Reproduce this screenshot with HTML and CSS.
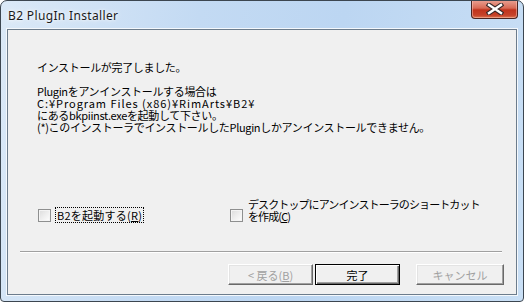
FILE: index.html
```html
<!DOCTYPE html>
<html lang="ja">
<head>
  <meta charset="UTF-8">
  <title>B2 PlugIn Installer</title>
  <link rel="stylesheet" href="styles.css">
</head>
<body>

<div class="window">
  <div class="titlebar">
    <span class="title">B2 PlugIn Installer</span>
    <button class="close" title="閉じる">
      <svg width="18" height="12" viewBox="0 0 18 12">
        <path d="M3 2 L15 10 M15 2 L3 10" stroke="#3a2a2a" stroke-width="4.6" stroke-linecap="square"/>
        <path d="M3 2 L15 10 M15 2 L3 10" stroke="#ffffff" stroke-width="2.4" stroke-linecap="square"/>
      </svg>
    </button>
  </div>

  <div class="client">
    <div class="message">
      <p>インストールが完了しました。</p>
      <p>Pluginをアンインストールする場合は<br>
        <span class="path">C:¥Program Files (x86)¥RimArts¥B2¥</span><br>
        にあるbkpiinst.exeを起動して下さい。<br>
        (*)このインストーラでインストールしたPluginしかアンインストールできません。</p>
    </div>

    <div class="options">
      <label class="check first">
        <span class="box"></span>
        <span class="text focus">B2を起動する(<u>R</u>)</span>
      </label>
      <label class="check wide">
        <span class="box"></span>
        <span class="text">デスクトップにアンインストーラのショートカット<br>を作成(<u>C</u>)</span>
      </label>
    </div>

    <hr class="sep">

    <div class="buttons">
      <button class="btn" disabled>&lt;&nbsp;戻る(<u>B</u>)</button>
      <button class="btn default">完了</button>
      <button class="btn cancel" disabled>キャンセル</button>
    </div>
  </div>
</div>

</body>
</html>
```

FILE: styles.css
```css
body {
  margin: 0;
  background: #ffffff;
  font-family: "Noto Sans CJK JP", sans-serif;
}

.window {
  width: 524px;
  height: 302px;
  box-sizing: border-box;
  border: 1px solid #3c4650;
  border-radius: 7px 7px 4px 4px;
  background: linear-gradient(100deg, #dbe9f7 0%, #c3daf3 35%, #bcd6f2 60%, #c9dff5 100%);
  display: flex;
  flex-direction: column;
  overflow: hidden;
}

.titlebar {
  height: 28px;
  display: flex;
  align-items: flex-start;
  justify-content: space-between;
}

.title {
  font-family: "Noto Sans", sans-serif;
  font-size: 12px;
  letter-spacing: 0.35px;
  color: #1a1a1a;
  padding: 6px 0 0 7px;
  text-shadow: 0 0 6px #ffffff, 0 0 3px #ffffff;
}

.close {
  width: 47px;
  height: 19px;
  margin: -1px 5px 0 0;
  padding: 0;
  border: 1px solid #4a2420;
  border-top: none;
  border-radius: 0 0 4px 4px;
  background: linear-gradient(#eaa395 0%, #d86a55 45%, #c0331c 55%, #c6432a 85%, #dd7650 100%);
  box-shadow: inset 0 0 0 1px rgba(255, 210, 200, 0.45);
  display: flex;
  align-items: center;
  justify-content: center;
}

.client {
  flex: 1;
  margin: 0 6px 6px 6px;
  border: 1px solid #6c7c8c;
  background: #f0f0f0;
  box-shadow: 0 0 0 1px #f4f8fc;
  display: flex;
  flex-direction: column;
  font-size: 11px;
  letter-spacing: -0.33px;
  color: #000000;
}

.message {
  padding: 31px 0 0 29px;
  line-height: 12px;
}

.message p {
  margin: 0 0 12px 0;
}

.path {
  letter-spacing: 0.95px;
}

.options {
  display: flex;
  align-items: flex-start;
  margin-top: 53px;
  padding-left: 30px;
}

.check {
  display: flex;
  align-items: center;
  gap: 5px;
  line-height: 12px;
}

.check.first {
  width: 192px;
  margin-top: 10px;
}

.check.first .text {
  letter-spacing: 0.25px;
}

.check.wide {
  align-items: flex-start;
}

.check.wide .text {
  letter-spacing: -0.9px;
}

.check.wide .box {
  margin-top: 11px;
}

.box {
  width: 11px;
  height: 11px;
  border: 1px solid #8e8f8f;
  background: linear-gradient(135deg, #dcdcdc, #ffffff);
  box-shadow: inset 0 0 0 1px #f4f4f4;
  flex: none;
}

.text.focus {
  outline: 1px dotted #000000;
  outline-offset: 0;
  padding: 1px 1px;
}

.sep {
  margin: auto 14px 0 12px;
  border: none;
  border-top: 1px solid #a0a0a0;
  border-bottom: 1px solid #ffffff;
}

.buttons {
  display: flex;
  justify-content: flex-end;
  gap: 2px;
  margin-top: 11px;
  padding: 0 12px 9px 0;
}

.btn {
  width: 85px;
  height: 21px;
  padding: 0;
  font-family: "Noto Sans CJK JP", sans-serif;
  font-size: 11px;
  letter-spacing: 0;
  background: #f0f0f0;
  color: #000000;
  border: 1px solid;
  border-color: #ffffff #696969 #696969 #ffffff;
  box-shadow: inset -1px -1px 0 #a0a0a0, inset 1px 1px 0 #e3e3e3;
}

.btn:disabled {
  color: #a0a0a0;
}

.btn.default {
  border: 1px solid #000000;
  box-shadow: inset 1px 1px 0 #ffffff, inset -1px -1px 0 #696969, inset -2px -2px 0 #a0a0a0;
}

.btn.cancel {
  width: 88px;
  margin-left: 14px;
}
```
